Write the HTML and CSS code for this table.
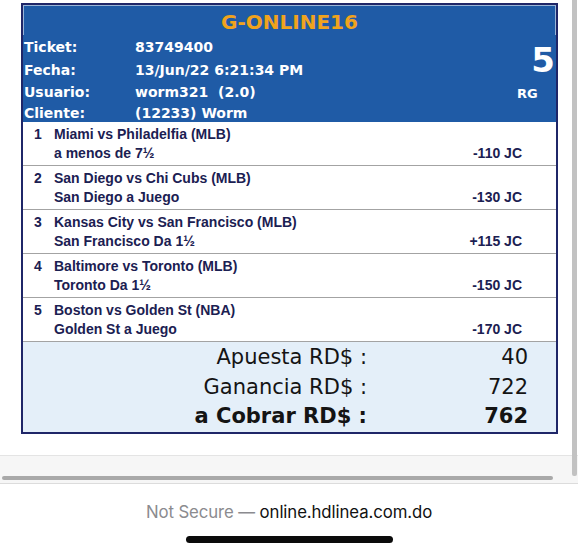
FILE: index.html
```html
<!DOCTYPE html>
<html lang="es">
<head>
<meta charset="utf-8">
<title>G-ONLINE16</title>
<link rel="stylesheet" href="styles.css">
</head>
<body>
<div class="screen">
  <div class="page">
    <div class="ticket">
      <div class="head">
        <div class="title">G-ONLINE16</div>
        <div class="info">
          <div class="lbl r1">Ticket:</div><div class="val r1">83749400</div>
          <div class="big">5</div>
          <div class="lbl r2">Fecha:</div><div class="val r2">13/Jun/22 6:21:34 PM</div>
          <div class="lbl r3">Usuario:</div><div class="val r3">worm321&nbsp; (2.0)</div>
          <div class="rg">RG</div>
          <div class="lbl r4">Cliente:</div><div class="val r4">(12233) Worm</div>
        </div>
      </div>
      <div class="bets">
        <div class="bet"><span class="num">1</span><span class="game">Miami vs Philadelfia (MLB)</span><span class="pick">a menos de 7½</span><span class="odds">-110 JC</span></div>
        <div class="bet"><span class="num">2</span><span class="game">San Diego vs Chi Cubs (MLB)</span><span class="pick">San Diego a Juego</span><span class="odds">-130 JC</span></div>
        <div class="bet"><span class="num">3</span><span class="game">Kansas City vs San Francisco (MLB)</span><span class="pick">San Francisco Da 1½</span><span class="odds">+115 JC</span></div>
        <div class="bet"><span class="num">4</span><span class="game">Baltimore vs Toronto (MLB)</span><span class="pick">Toronto Da 1½</span><span class="odds">-150 JC</span></div>
        <div class="bet"><span class="num">5</span><span class="game">Boston vs Golden St (NBA)</span><span class="pick">Golden St a Juego</span><span class="odds">-170 JC</span></div>
      </div>
      <div class="summary">
        <div class="s-lbl">Apuesta RD$ :</div><div class="s-val">40</div>
        <div class="s-lbl">Ganancia RD$ :</div><div class="s-val">722</div>
        <div class="s-lbl total">a Cobrar RD$ :</div><div class="s-val total">762</div>
      </div>
    </div>
  </div>
  <div class="hbar"><div class="thumb"></div></div>
  <div class="url"><span class="ns">Not Secure —</span> <span class="dom">online.hdlinea.com.do</span></div>
  <div class="homebar"><div class="pill"></div></div>
  <div class="vscroll"></div>
</div>
</body>
</html>
```
FILE: styles.css
```css
* { box-sizing: border-box; }
html, body { margin: 0; padding: 0; background: #fff; }
.screen {
  position: relative;
  width: 578px;
  height: 551px;
  overflow: hidden;
  background: #fff;
}
.page {
  height: 455px;
  padding: 3px 0 0 21px;
}
.ticket {
  width: 537px;
  border: 2px solid #1f2668;
  background: #fff;
}
.head {
  background: #1f5ba6;
  color: #fff;
  font-family: "DejaVu Sans", Verdana, sans-serif;
  font-weight: bold;
}
.title {
  height: 30px;
  padding-top: 3px;
  line-height: 27px;
  text-align: center;
  font-size: 20px;
  color: #f0a31d;
  border: 1px solid rgba(255,255,255,0.55);
  border-bottom: 0;
}
.info {
  display: grid;
  grid-template-columns: 111px 1fr 40px;
  grid-template-rows: 23px 23px 22px 19px;
  font-size: 14px;
  padding-left: 1px;
}
.lbl, .val { display: flex; align-items: center; }
.r1 { grid-row: 1; }
.r2 { grid-row: 2; }
.r3 { grid-row: 3; }
.r4 { grid-row: 4; }
.lbl { grid-column: 1; }
.val { grid-column: 2; }
.big {
  grid-column: 3;
  grid-row: 1 / span 2;
  justify-self: end;
  align-self: center;
  font-size: 34px;
  line-height: 34px;
  padding-right: 1px;
  margin-top: 3px;
}
.rg {
  grid-column: 3;
  grid-row: 3;
  align-self: center;
  justify-self: start;
  font-size: 13px;
  margin-left: 1px;
  margin-top: 3px;
}
.bets {
  font-family: "Liberation Sans", Arial, sans-serif;
  font-weight: bold;
  font-size: 14px;
  color: #1b2052;
}
.bet {
  display: grid;
  grid-template-columns: 20px 1fr auto;
  grid-template-rows: 19px 19px;
  height: 44px;
  padding: 3px 34px 0 11px;
  border-bottom: 1px solid #a3a3a3;
  line-height: 19px;
}
.num { grid-column: 1; grid-row: 1; }
.game { grid-column: 2 / span 2; grid-row: 1; white-space: nowrap; }
.pick { grid-column: 2; grid-row: 2; }
.odds { grid-column: 3; grid-row: 2; text-align: right; }
.summary {
  display: grid;
  grid-template-columns: 1fr 161px;
  background: #e4eff9;
  padding: 1px 28px 0 0;
  font-family: "DejaVu Sans", Verdana, sans-serif;
  font-size: 21px;
  line-height: 29.5px;
  color: #141414;
}
.s-lbl, .s-val { text-align: right; }
.total { font-weight: bold; }
.hbar {
  height: 29px;
  border-top: 1px solid #e4e4e4;
  border-bottom: 1px solid #dcdcdc;
  background: #f6f6f6;
  padding: 20px 0 0 2px;
}
.thumb {
  width: 551px;
  height: 4px;
  border-radius: 2px;
  background: #a9a9a9;
}
.url {
  height: 50px;
  padding-top: 18px;
  text-align: center;
  font-family: Inter, "Liberation Sans", sans-serif;
  font-size: 16.8px;
  line-height: 20px;
  letter-spacing: -0.1px;
}
.ns { color: #8b8b8f; }
.dom { color: #111; }
.homebar {
  display: flex;
  justify-content: center;
  padding-left: 1px;
  padding-top: 2px;
}
.pill {
  width: 207px;
  height: 7px;
  border-radius: 4px;
  background: #0b0b0b;
}
.vscroll {
  position: absolute;
  top: 0;
  left: 572px;
  width: 5px;
  height: 476px;
  background: #c2c2c2;
  border-radius: 0 0 2px 2px;
}
```
